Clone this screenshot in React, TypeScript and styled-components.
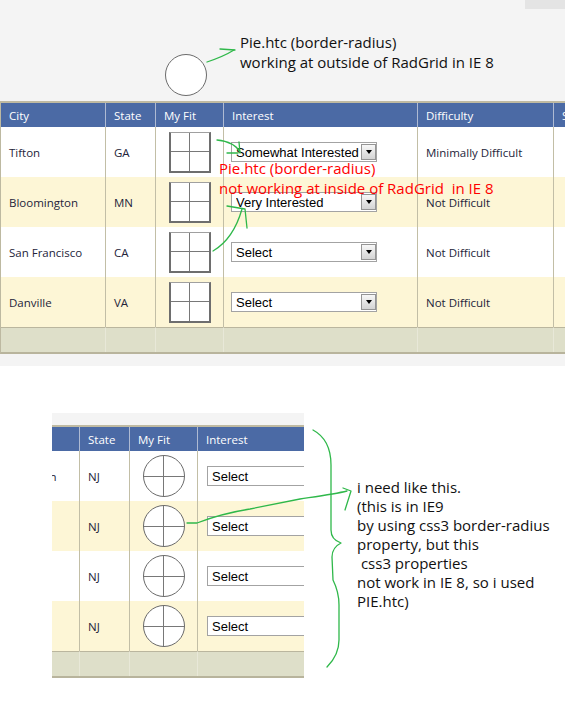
import React from "react";
import styled, { createGlobalStyle, css } from "styled-components";

type Engine = "ie8" | "ie9";

type FitRow = {
  city: string;
  state: string;
  interest: string;
  difficulty: string;
};

const HEADERS = ["City", "State", "My Fit", "Interest", "Difficulty", "Status"];
const COLUMN_WIDTHS = [105, 50, 68, 194, 136, 80];

const IE8_ROWS: FitRow[] = [
  { city: "Tifton", state: "GA", interest: "Somewhat Interested", difficulty: "Minimally Difficult" },
  { city: "Bloomington", state: "MN", interest: "Very Interested", difficulty: "Not Difficult" },
  { city: "San Francisco", state: "CA", interest: "Select", difficulty: "Not Difficult" },
  { city: "Danville", state: "VA", interest: "Select", difficulty: "Not Difficult" },
];

const IE9_ROWS: FitRow[] = [
  { city: "Hackettstown", state: "NJ", interest: "Select", difficulty: "Not Difficult" },
  { city: "Trenton", state: "NJ", interest: "Select", difficulty: "Not Difficult" },
  { city: "Newark", state: "NJ", interest: "Select", difficulty: "Not Difficult" },
  { city: "Camden", state: "NJ", interest: "Select", difficulty: "Not Difficult" },
];

// Hand-drawn pen strokes laid over the page (page coordinates).
const INK_STROKES = [
  // arrow from the round div to its note
  "M207,62 C216,59 226,55 234,50",
  "M220,49 L235,50",
  // arrow into the first dropdown
  "M217,140 C227,141 236,145 240,152",
  "M227,153 L238,153",
  "M239,142 L240,153",
  // arrow from a fit box up to the second dropdown
  "M213,251 C225,244 236,230 242,209",
  "M227,206 L245,209 L247,228",
  // arrow from the round fit mark to the explanation
  "M187,523 L197,523 C210,518 225,513 250,509 L300,499 C320,496 335,494 347,491",
  "M343,488 L351,491 L345,510",
  // curly brace beside the IE9 grid
  "M313,430 C326,437 331,450 331,465 L331,530 C331,537 335,541 341,543 C335,546 332,550 332,557 L333,580 C338,590 339,597 339,605 L339,640 C339,652 334,660 327,667",
];

const GlobalStyle = createGlobalStyle`
  html, body {
    margin: 0;
    padding: 0;
    background: #ffffff;
    overflow: hidden;
  }
  body {
    font-family: "Open Sans", "Noto Sans", sans-serif;
  }
`;

const Page = styled.div`
  position: relative;
  width: 565px;
  height: 719px;
  overflow: hidden;
  background: #ffffff;
`;

/* ---------- IE8 capture ---------- */

const Ie8Shot = styled.section`
  background: #f4f4f4;
  padding-bottom: 12px;
  overflow: hidden;
`;

const ShotHead = styled.div`
  height: 101px;
  display: flex;
  flex-direction: column;
`;

const CornerTab = styled.div`
  align-self: flex-end;
  width: 40px;
  height: 9px;
  background: #e4e4e4;
`;

const PieRow = styled.div`
  display: flex;
  align-items: flex-start;
  gap: 33px;
  margin-top: 23px;
  padding-left: 165px;
`;

const PieCircle = styled.div`
  flex: none;
  width: 42px;
  height: 42px;
  margin-top: 22px;
  box-sizing: border-box;
  border: 1px solid #6b6b6b;
  border-radius: 50%;
  background: #ffffff;
`;

const Note = styled.p<{ $color?: string; $lh: number }>`
  margin: 0;
  font-family: "Open Sans", "Noto Sans", sans-serif;
  font-size: 15px;
  line-height: ${(p) => p.$lh}px;
  color: ${(p) => p.$color ?? "#111111"};
  white-space: pre;
`;

const GridWrap = styled.div`
  position: relative;
`;

const RedNote = styled(Note)`
  position: absolute;
  left: 219px;
  top: 58px;
`;

/* ---------- IE9 capture ---------- */

const BottomRow = styled.div`
  display: flex;
  align-items: flex-start;
  padding: 47px 0 0 52px;
`;

const Ie9Frame = styled.div`
  flex: none;
  width: 252px;
  padding-top: 12px;
  background: #f4f4f4;
  overflow: hidden;
`;

const SideNote = styled(Note)`
  margin: 65px 0 0 53px;
`;

/* ---------- grid ---------- */

const GridTable = styled.div<{ $shift: number; $cols: string }>`
  display: grid;
  grid-template-columns: ${(p) => p.$cols};
  width: max-content;
  margin-left: ${(p) => p.$shift}px;
  border-top: 2px solid #bfbaa2;
  border-bottom: 2px solid #b8b49c;
  border-left: 1px solid #bdb9a1;
  font-family: "Open Sans", "Noto Sans", sans-serif;
  font-size: 11.5px;
`;

const HeadCell = styled.div`
  box-sizing: border-box;
  height: 24px;
  display: flex;
  align-items: center;
  padding: 0 8px;
  background: #4b6aa5;
  color: #ffffff;
  border-right: 1px solid #aebad3;
  white-space: nowrap;
  overflow: hidden;
`;

const BodyCell = styled.div<{ $alt: boolean; $center?: boolean }>`
  box-sizing: border-box;
  height: 50px;
  display: flex;
  align-items: center;
  justify-content: ${(p) => (p.$center ? "center" : "flex-start")};
  padding: 0 8px;
  background: ${(p) => (p.$alt ? "#fdf6d6" : "#ffffff")};
  color: #24243a;
  border-right: 1px solid #c2bea6;
  white-space: nowrap;
  overflow: hidden;
`;

const InterestCell = styled(BodyCell)<{ $engine: Engine }>`
  padding-left: ${(p) => (p.$engine === "ie9" ? 9 : 7)}px;
  overflow: visible;
`;

const FootCell = styled.div`
  box-sizing: border-box;
  height: 25px;
  background: #dedfc9;
  border-top: 1px solid #bab69e;
  border-right: 1px solid #e8e8d8;
`;

const FitMark = styled.span<{ $round: boolean }>`
  position: relative;
  display: block;
  flex: none;
  width: 42px;
  height: 41px;
  box-sizing: border-box;
  background: #ffffff;
  ${(p) =>
    p.$round
      ? css`
          height: 42px;
          border: 1px solid #6a6a6a;
          border-radius: 50%;
        `
      : css`
          border: 2px solid #6e6e6e;
          border-top: 1px solid #a0a0a0;
        `}

  &::before {
    content: "";
    position: absolute;
    top: 0;
    bottom: 0;
    left: 50%;
    width: 1px;
    margin-left: -0.5px;
    background: #787878;
  }

  &::after {
    content: "";
    position: absolute;
    left: 0;
    right: 0;
    top: 50%;
    height: 1px;
    margin-top: -0.5px;
    background: #787878;
  }
`;

const Dropdown = styled.div`
  flex: none;
  display: flex;
  align-items: center;
  box-sizing: border-box;
  width: 146px;
  height: 20px;
  padding-left: 4px;
  border: 1px solid #a3a3a3;
  background: #ffffff;
  font-family: "Liberation Sans", Arial, sans-serif;
  font-size: 13px;
  color: #000000;
`;

const DropLabel = styled.span`
  flex: 1;
  padding-top: 2px;
  line-height: 16px;
  white-space: nowrap;
  overflow: hidden;
`;

const DropButton = styled.span`
  flex: none;
  display: flex;
  align-items: center;
  justify-content: center;
  box-sizing: border-box;
  width: 15px;
  height: 16px;
  border: 1px solid #959595;
  background: linear-gradient(#f7f7f7, #d4d4d4);

  &::after {
    content: "";
    border-left: 3.5px solid transparent;
    border-right: 3.5px solid transparent;
    border-top: 4px solid #000000;
  }
`;

const Ink = styled.svg`
  position: absolute;
  left: 0;
  top: 0;
  pointer-events: none;
`;

function FitGrid({
  engine,
  rows,
  shift = 0,
  columns = HEADERS.length,
}: {
  engine: Engine;
  rows: FitRow[];
  shift?: number;
  columns?: number;
}) {
  const heads = HEADERS.slice(0, columns);
  const cols = COLUMN_WIDTHS.slice(0, columns)
    .map((w) => `${w}px`)
    .join(" ");

  return (
    <GridTable $shift={shift} $cols={cols}>
      {heads.map((h) => (
        <HeadCell key={h}>{h}</HeadCell>
      ))}
      {rows.map((r, i) => {
        const alt = i % 2 === 1;
        const cells = [
          <BodyCell key="city" $alt={alt}>
            {r.city}
          </BodyCell>,
          <BodyCell key="state" $alt={alt}>
            {r.state}
          </BodyCell>,
          <BodyCell key="fit" $alt={alt} $center>
            <FitMark $round={engine === "ie9"} />
          </BodyCell>,
          <InterestCell key="interest" $alt={alt} $engine={engine}>
            <Dropdown>
              <DropLabel>{r.interest}</DropLabel>
              <DropButton />
            </Dropdown>
          </InterestCell>,
          <BodyCell key="difficulty" $alt={alt}>
            {r.difficulty}
          </BodyCell>,
          <BodyCell key="status" $alt={alt} />,
        ];
        return <React.Fragment key={i}>{cells.slice(0, columns)}</React.Fragment>;
      })}
      {heads.map((h) => (
        <FootCell key={h} />
      ))}
    </GridTable>
  );
}

export default function App() {
  return (
    <>
      <GlobalStyle />
      <Page>
        <Ie8Shot>
          <ShotHead>
            <CornerTab />
            <PieRow>
              <PieCircle />
              <Note $lh={20}>{"Pie.htc (border-radius)\nworking at outside of RadGrid in IE 8"}</Note>
            </PieRow>
          </ShotHead>
          <GridWrap>
            <FitGrid engine="ie8" rows={IE8_ROWS} />
            <RedNote $lh={19.5} $color="#ff0000">
              {"Pie.htc (border-radius)\nnot working at inside of RadGrid  in IE 8"}
            </RedNote>
          </GridWrap>
        </Ie8Shot>

        <BottomRow>
          <Ie9Frame>
            <FitGrid engine="ie9" rows={IE9_ROWS} shift={-78} columns={4} />
          </Ie9Frame>
          <SideNote $lh={19}>
            {"i need like this.\n(this is in IE9\nby using css3 border-radius\nproperty, but this\n css3 properties\nnot work in IE 8, so i used\nPIE.htc)"}
          </SideNote>
        </BottomRow>

        <Ink width={565} height={719} viewBox="0 0 565 719">
          {INK_STROKES.map((d, i) => (
            <path
              key={i}
              d={d}
              fill="none"
              stroke="#2fb84a"
              strokeWidth={1.3}
              strokeLinecap="round"
              strokeLinejoin="round"
            />
          ))}
        </Ink>
      </Page>
    </>
  );
}
